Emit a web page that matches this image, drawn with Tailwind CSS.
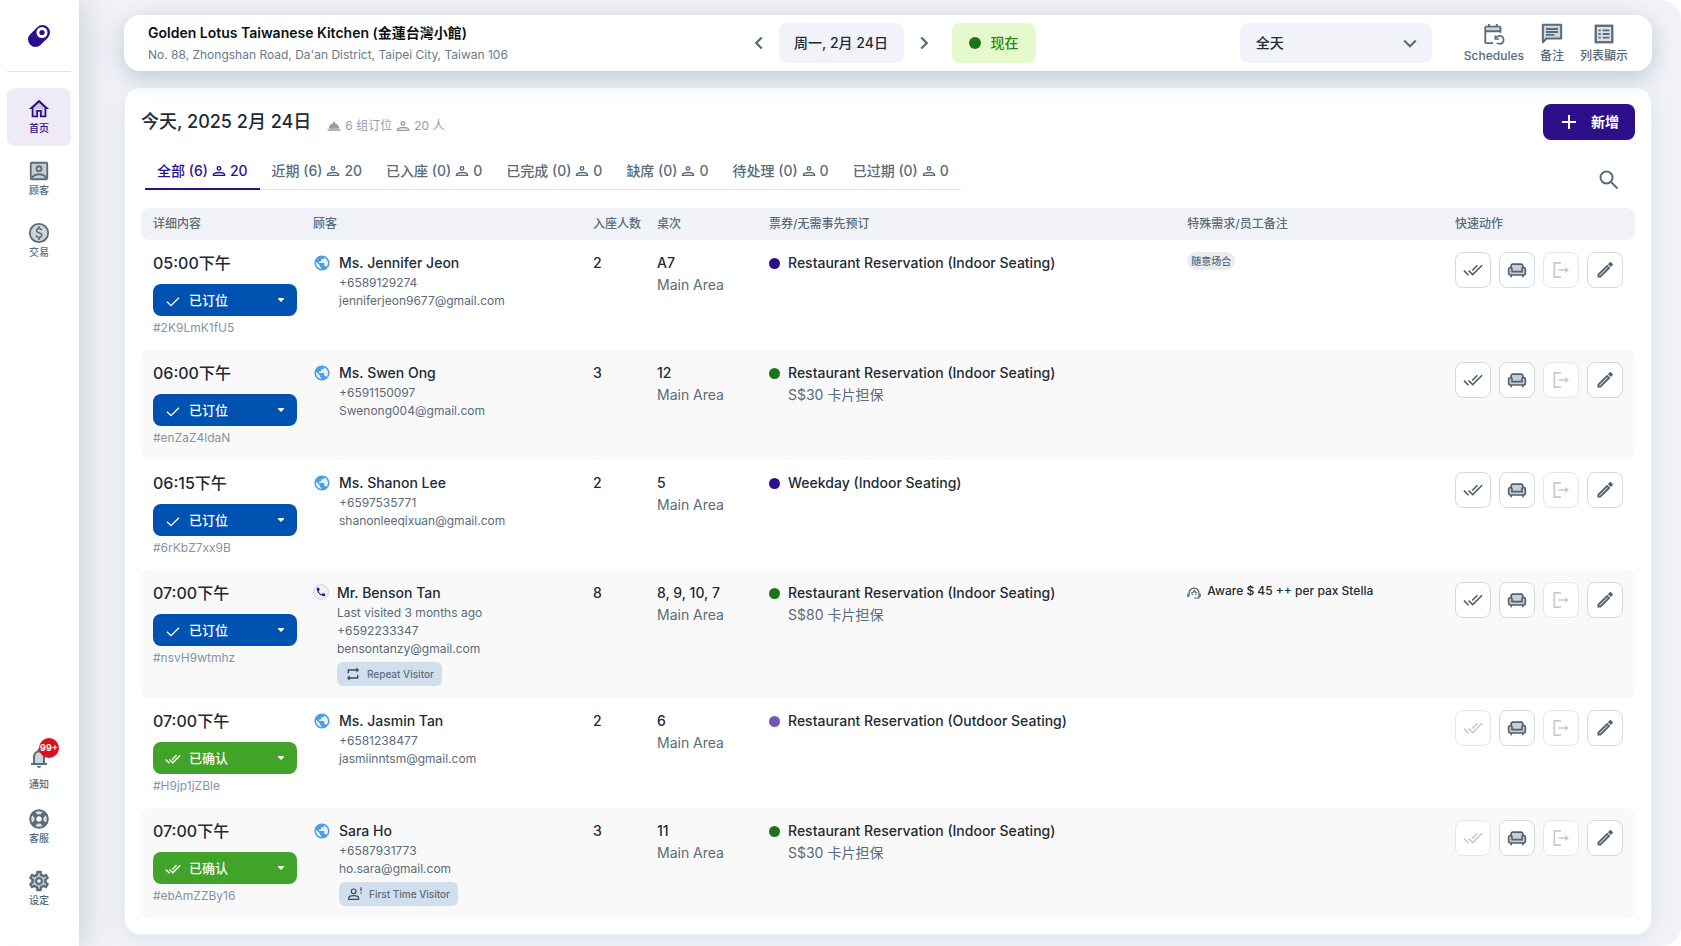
<!DOCTYPE html>
<html lang="zh-CN">
<head>
  <meta charset="UTF-8">
  <meta name="viewport" content="width=device-width, initial-scale=1.0">
  <title>订位列表</title>
  <script src="https://cdn.jsdelivr.net/npm/@tailwindcss/browser@4"></script>
</head>
<body class="bg-white font-['Inter','Noto_Sans_CJK_SC',sans-serif] text-[#212b36]">

  <!-- icon sprite -->
  <svg class="hidden" aria-hidden="true">
    <symbol id="i-home" viewBox="0 0 24 24"><path fill="#c3c7cf" d="M7 10.2V18h2v-6h6v6h2v-7.800l-5-4.500z"/><path fill="currentColor" d="M12 2 1 12h3v9h7v-6h2v6h7v-9h3L12 2zm6 17h-3v-6H9v6H6v-8.500l6-5.400 6 5.400V19z"/></symbol>
    <symbol id="i-contact" viewBox="0 0 24 24"><g fill="#c9ced6" stroke="currentColor" stroke-width="2"><rect x="3" y="3" width="18" height="18" rx="1"/><circle cx="12" cy="9.500" r="2.700"/><path fill="none" d="M4 19.500c2-2.700 4.600-4 8-4s6 1.300 8 4"/></g></symbol>
    <symbol id="i-money" viewBox="0 0 24 24"><circle cx="12" cy="12" r="10" fill="#cfd4dc" stroke="currentColor" stroke-width="2"/><path fill="currentColor" d="M12.890 11.100c-1.780-.590-2.640-.960-2.640-1.900 0-1.020 1.110-1.390 1.810-1.390 1.310 0 1.790.990 1.900 1.340l1.580-.670c-.150-.440-.820-1.910-2.660-2.230V4.500h-1.750v1.760c-2.600.560-2.620 2.850-2.620 2.960 0 2.270 2.250 2.910 3.350 3.310 1.580.560 2.280 1.070 2.280 2.030 0 1.130-1.050 1.610-1.980 1.610-1.820 0-2.340-1.870-2.400-2.090L8.100 14.750c.630 2.190 2.280 2.780 3.020 2.960v1.790h1.750v-1.740c.520-.090 3.020-.590 3.020-3.220.010-1.390-.600-2.610-3-3.440z"/></symbol>
    <symbol id="i-bell" viewBox="0 0 24 24"><path fill="#cfd4dc" d="M12 6.500c-2.500 0-4 2-4 4.500v6h8v-6c0-2.500-1.500-4.500-4-4.500z"/><path fill="currentColor" d="M12 22c1.100 0 2-.900 2-2h-4c0 1.100.900 2 2 2zm6-5v-6c0-3.070-1.630-5.640-4.500-6.320V4c0-.830-.670-1.500-1.500-1.500s-1.500.670-1.500 1.500v.680C7.640 5.360 6 7.920 6 11v6H4v2h16v-2h-2zm-2 0H8v-6c0-2.480 1.510-4.500 4-4.500s4 2.020 4 4.500v6z"/></symbol>
    <symbol id="i-support" viewBox="0 0 24 24"><circle cx="12" cy="12" r="7" fill="none" stroke="#dde1e6" stroke-width="6"/><g fill="none" stroke="currentColor" stroke-width="2.200"><circle cx="12" cy="12" r="9.600"/><circle cx="12" cy="12" r="4"/></g><path stroke="currentColor" stroke-width="5" d="m5.600 5.600 3.400 3.400M15 15l3.400 3.400M18.400 5.600 15 9M9 15l-3.400 3.400"/></symbol>
    <symbol id="i-gear" viewBox="1 1 22 22"><path fill="none" stroke="#cfd4dc" stroke-width="3" d="M12 6.500a5.500 5.500 0 1 0 0 11 5.500 5.500 0 1 0 0-11z"/><path fill="currentColor" stroke="currentColor" stroke-width=".5" d="M19.430 12.980c.040-.320.070-.640.070-.980 0-.340-.030-.660-.070-.980l2.110-1.650c.190-.150.240-.420.120-.640l-2-3.460c-.090-.160-.260-.250-.440-.250-.060 0-.120.010-.170.030l-2.490 1c-.520-.400-1.080-.730-1.690-.980l-.380-2.650C14.460 2.180 14.250 2 14 2h-4c-.250 0-.460.180-.490.420l-.380 2.650c-.610.250-1.170.590-1.690.980l-2.490-1c-.060-.020-.120-.030-.180-.030-.170 0-.340.090-.430.250l-2 3.460c-.130.220-.070.490.120.640l2.110 1.650c-.040.320-.070.650-.070.980 0 .330.030.660.070.980l-2.110 1.650c-.190.150-.240.420-.120.640l2 3.460c.090.160.260.250.440.250.060 0 .120-.010.170-.030l2.490-1c.520.400 1.080.730 1.690.980l.380 2.650c.030.240.240.420.490.420h4c.250 0 .460-.180.490-.420l.380-2.650c.610-.250 1.170-.590 1.690-.980l2.490 1c.060.020.120.030.180.030.170 0 .340-.090.430-.250l2-3.460c.120-.220.070-.490-.120-.640l-2.110-1.650zm-1.980-1.710c.040.310.050.520.050.730 0 .210-.020.430-.050.730l-.140 1.130.890.700 1.080.840-.700 1.210-1.270-.510-1.040-.420-.900.680c-.430.320-.840.560-1.250.730l-1.060.430-.160 1.130-.200 1.350h-1.400l-.190-1.350-.160-1.130-1.060-.430c-.430-.180-.830-.410-1.230-.710l-.910-.700-1.060.430-1.270.510-.700-1.210 1.080-.840.890-.700-.140-1.130c-.030-.310-.050-.540-.050-.740s.020-.430.050-.730l.140-1.130-.890-.700-1.080-.840.700-1.210 1.270.510 1.040.420.900-.680c.430-.320.840-.560 1.250-.730l1.060-.430.160-1.130.200-1.350h1.390l.190 1.350.160 1.130 1.060.430c.430.180.830.410 1.230.710l.910.700 1.060-.430 1.270-.510.700 1.210-1.070.850-.890.700.140 1.130zM12 8c-2.210 0-4 1.790-4 4s1.790 4 4 4 4-1.790 4-4-1.790-4-4-4zm0 6c-1.100 0-2-.900-2-2s.900-2 2-2 2 .900 2 2-.900 2-2 2z"/></symbol>
    <symbol id="i-left" viewBox="0 0 24 24"><path fill="none" stroke="currentColor" stroke-width="2.500" d="m15 6-6 6 6 6"/></symbol>
    <symbol id="i-right" viewBox="0 0 24 24"><path fill="none" stroke="currentColor" stroke-width="2.500" d="m9 6 6 6-6 6"/></symbol>
    <symbol id="i-down" viewBox="0 0 24 24"><path fill="none" stroke="currentColor" stroke-width="2.500" d="m5 9 7 7 7-7"/></symbol>
    <symbol id="i-schedule" viewBox="0 0 24 24"><path fill="#cfd4dc" d="M4 5h16v4H4z"/><g fill="none" stroke="currentColor" stroke-width="2"><path d="M11 22H3.500a1 1 0 0 1-1-1V5a1 1 0 0 1 1-1H18a1 1 0 0 1 1 1v5.500M2.500 9H19M6.500 1v3M15 1v3"/><path stroke-width="1.800" d="M14.500 16a4.400 4.400 0 1 1 .500 5.500M13.500 13.500v4h4"/></g></symbol>
    <symbol id="i-chat" viewBox="0 0 24 24"><path fill="#cfd4dc" stroke="currentColor" stroke-width="2.200" stroke-linejoin="round" d="M2 2h20v15H6l-4 4z"/><path stroke="currentColor" stroke-width="2" d="M5.500 6.500h13M5.500 9.800h13M5.500 13h9"/></symbol>
    <symbol id="i-list" viewBox="0 0 24 24"><rect x="3" y="3" width="18" height="18" fill="#dde1e6" stroke="currentColor" stroke-width="2.500"/><path stroke="currentColor" stroke-width="2" d="M6 8h2.500M10.500 8h7.500M6 12h2.500M10.500 12h7.500M6 16h2.500M10.500 16h7.500"/></symbol>
    <symbol id="i-person" viewBox="0 0 24 24"><g fill="none" stroke="currentColor" stroke-width="2.500"><circle cx="12" cy="7.500" r="3"/><path d="M2.500 19.500v-1c0-2.500 4-3.800 9.500-3.800s9.500 1.300 9.500 3.800v1z"/></g></symbol>
    <symbol id="i-bellhop" viewBox="0 0 24 24"><path fill="currentColor" d="M1 17.500h22V20H1zM12 4.500a2 2 0 0 1 2 2c0 .500-.200 1-.500 1.300 4.300.700 7.500 4 7.500 8.700H3c0-4.700 3.200-8 7.500-8.700-.300-.300-.500-.800-.500-1.300a2 2 0 0 1 2-2z"/></symbol>
    <symbol id="i-plus" viewBox="0 0 24 24"><path stroke="currentColor" stroke-width="2.400" d="M12 3.500v17M3.500 12h17"/></symbol>
    <symbol id="i-search" viewBox="0 0 24 24"><g fill="none" stroke="currentColor" stroke-width="2"><circle cx="9.500" cy="9.500" r="6"/><path d="m14 14 6.500 6.500"/></g></symbol>
    <symbol id="i-globe" viewBox="0 0 24 24"><circle cx="12" cy="12" r="9" fill="#e3f1fc"/><path fill="currentColor" d="M12 2C6.480 2 2 6.480 2 12s4.480 10 10 10 10-4.480 10-10S17.520 2 12 2zm-1 17.930c-3.950-.490-7-3.850-7-7.930 0-.620.080-1.210.210-1.790L9 15v1c0 1.100.900 2 2 2v1.930zm6.900-2.540c-.260-.810-1-1.390-1.900-1.390h-1v-3c0-.550-.450-1-1-1H8v-2h2c.550 0 1-.450 1-1V7h2c1.100 0 2-.900 2-2v-.410c2.930 1.190 5 4.060 5 7.410 0 2.080-.800 3.970-2.100 5.390z"/></symbol>
    <symbol id="i-phone" viewBox="0 0 24 24"><circle cx="12" cy="12" r="11" fill="#eef0f4" stroke="#cfd5dc" stroke-width="1.500"/><path fill="#2e0f8a" transform="translate(3.500 3.500) scale(.7)" d="M6.620 10.790c1.440 2.830 3.760 5.140 6.590 6.590l2.200-2.200c.270-.270.670-.360 1.020-.240 1.120.370 2.330.570 3.570.570.550 0 1 .450 1 1V20c0 .550-.450 1-1 1-9.390 0-17-7.610-17-17 0-.550.450-1 1-1h3.500c.550 0 1 .450 1 1 0 1.250.200 2.450.570 3.570.110.350.030.740-.250 1.020l-2.200 2.200z"/></symbol>
    <symbol id="i-check" viewBox="0 0 24 24"><path fill="none" stroke="currentColor" stroke-width="2" d="m3 13 6 6L21 7"/></symbol>
    <symbol id="i-done" viewBox="0 0 24 24"><path fill="currentColor" d="M18 7l-1.410-1.410-6.340 6.340 1.410 1.410L18 7zm4.240-1.410L11.660 16.170 7.480 12l-1.410 1.410L11.660 19l12-12-1.420-1.410zM.410 13.410L6 19l1.410-1.410L1.830 12 .410 13.410z"/></symbol>
    <symbol id="i-caret" viewBox="0 0 24 24"><path fill="currentColor" d="M6 8h12v2l-6 6-6-6z"/></symbol>
    <symbol id="i-sofa" viewBox="0 0 24 24"><path fill="#c9ced6" d="M5 5h14v4h3v9H2V9h3z"/><path fill="currentColor" d="M20 8V7c0-1.660-1.340-3-3-3H7C5.340 4 4 5.340 4 7v1c-1.660 0-3 1.340-3 3v5c0 1.660 1.340 3 3 3v1c0 .550.450 1 1 1s1-.450 1-1v-1h12v1c0 .550.450 1 1 1s1-.450 1-1v-1c1.660 0 3-1.340 3-3v-5c0-1.660-1.340-3-3-3zM6 7c0-.550.450-1 1-1h10c.550 0 1 .450 1 1v1.780c-.610.550-1 1.340-1 2.220v2H7v-2c0-.880-.390-1.670-1-2.220V7zm15 9c0 .550-.450 1-1 1H4c-.550 0-1-.450-1-1v-5c0-.550.450-1 1-1s1 .450 1 1v4h14v-4c0-.550.450-1 1-1s1 .450 1 1v5z"/></symbol>
    <symbol id="i-exit" viewBox="0 0 24 24"><path fill="none" stroke="currentColor" stroke-width="2" d="M12 3.500H4v17h8M9 12h11"/><path fill="currentColor" d="m17 8.500 4.500 3.500-4.500 3.500z"/></symbol>
    <symbol id="i-edit" viewBox="0 0 24 24"><path fill="#c9ced6" stroke="currentColor" stroke-width="2" d="M4 17.500V20h2.500L17 9.500 14.500 7z"/><path fill="currentColor" d="m15.500 5 2.200-2.200c.400-.400 1-.400 1.400 0l2.100 2.100c.400.400.400 1 0 1.400L19 8.500z"/></symbol>
    <symbol id="i-repeat" viewBox="0 0 24 24"><path fill="currentColor" d="M6 7h11v3l4-4-4-4v3H4v6h2V7zm12 10H7v-3l-4 4 4 4v-3h13v-6h-2v4z"/></symbol>
    <symbol id="i-first" viewBox="0 0 24 24"><g fill="none" stroke="currentColor" stroke-width="1.800"><circle cx="10" cy="8" r="3.500"/><path d="M2.500 20v-1.500c0-2.500 3.300-4 7.500-4s7.500 1.500 7.500 4V20z"/><path d="M21 2v5.500M21 9.500v2"/></g></symbol>
    <symbol id="i-agent" viewBox="0 0 24 24"><g fill="none" stroke="currentColor" stroke-width="2"><path d="M3.500 17v-5a8.500 8.500 0 0 1 17 0v8.500h-8"/><path d="M1.500 13v5h2M22.500 13v5h-2M6.500 12c3 0 5-1.500 6-4 1 2 2.500 3.300 5 3.500"/></g><circle cx="9" cy="14.500" r="1.200" fill="currentColor"/><circle cx="15" cy="14.500" r="1.200" fill="currentColor"/></symbol>
  </svg>

  <div class="flex min-h-screen overflow-hidden rounded-[20px] bg-[#f1f3f8]">

    <nav class="z-10 flex w-[79px] shrink-0 flex-col items-center bg-white pr-px pb-[38px] text-[10px] font-medium leading-4 text-[#5a6b79] shadow-[6px_0_32px_#ccd2d8]">
      <a href="#" class="mt-6 block" aria-label="Home">
        <svg class="size-6" viewBox="0 0 24 24"><path stroke="#2e0f8a" stroke-width="15" stroke-linecap="round" d="m8.500 15.500 7-7"/><circle cx="15" cy="8.500" r="5.500" fill="#fff"/><circle cx="15" cy="8.500" r="2.600" fill="#2e0f8a"/></svg>
      </a>
      <div class="mt-[23px] h-px w-16 bg-[#e1e4e8]"></div>
      <div class="mt-4 flex flex-col gap-1">
        <a href="#" class="flex h-[58px] w-16 flex-col items-center justify-center rounded-lg bg-[#eeebf6] text-[#2e0f8a]">
          <svg class="size-[22px]"><use href="#i-home"/></svg>首页
        </a>
        <a href="#" class="flex h-[58px] w-16 flex-col items-center justify-center">
          <svg class="size-[22px]"><use href="#i-contact"/></svg>顾客
        </a>
        <a href="#" class="flex h-[58px] w-16 flex-col items-center justify-center">
          <svg class="size-[22px]"><use href="#i-money"/></svg>交易
        </a>
      </div>
      <div class="mt-auto flex flex-col items-center">
        <a href="#" class="relative flex flex-col items-center gap-1.5">
          <svg class="size-6"><use href="#i-bell"/></svg>通知
          <span class="absolute -top-2 left-3 flex size-5 items-center justify-center rounded-full bg-[#d9101e] text-[9px] font-bold text-white">99+</span>
        </a>
        <a href="#" class="mt-4 flex flex-col items-center">
          <svg class="size-[22px]"><use href="#i-support"/></svg>客服
        </a>
        <a href="#" class="mt-6 flex flex-col items-center">
          <svg class="size-[22px]"><use href="#i-gear"/></svg>设定
        </a>
      </div>
    </nav>

    <main class="flex min-w-0 flex-1 flex-col gap-4 pt-[15px] pr-[29px] pb-[11px] pl-[45px]">

      <header class="z-20 grid h-14 grid-cols-[1fr_auto_1fr] items-center rounded-2xl bg-white px-6 shadow-[0_6px_24px_#bfc7cf]">
        <div class="pt-0.5">
          <h1 class="text-sm font-semibold leading-5 text-[#0c1116]">Golden Lotus Taiwanese Kitchen (金蓮台灣小館)</h1>
          <p class="mt-0.5 text-xs leading-5 text-[#6b7a88]">No. 88, Zhongshan Road, Da'an District, Taipei City, Taiwan 106</p>
        </div>
        <div class="flex items-center gap-1 pl-0.5">
          <button class="flex h-10 w-8 items-center justify-center text-[#5a6b79]" aria-label="前一天"><svg class="size-[22px]"><use href="#i-left"/></svg></button>
          <button class="h-10 w-[125px] rounded-lg bg-[#f2f3f8] text-sm font-medium">周一, 2月 24日</button>
          <button class="flex h-10 w-8 items-center justify-center text-[#5a6b79]" aria-label="后一天"><svg class="size-[22px]"><use href="#i-right"/></svg></button>
          <button class="ml-2 flex h-10 w-[84px] items-center justify-center gap-2.5 rounded-lg bg-[#e6f9cd] text-sm font-medium text-[#1d8a17]"><span class="size-3 rounded-full bg-[#1d751b]"></span>现在</button>
        </div>
        <div class="flex items-center justify-end text-xs font-medium text-[#5a6b79]">
          <div class="relative mr-8">
            <select aria-label="时段" class="h-10 w-48 appearance-none rounded-lg bg-[#f2f3f8] px-4 text-sm font-medium text-[#212b36]">
              <option>全天</option>
            </select>
            <svg class="pointer-events-none absolute top-2.5 right-3 size-5"><use href="#i-down"/></svg>
          </div>
          <div class="flex gap-4 pt-0.5">
            <button class="flex flex-col items-center gap-0.5 leading-[18px]"><svg class="size-[22px]"><use href="#i-schedule"/></svg>Schedules</button>
            <button class="flex flex-col items-center gap-0.5 leading-[18px]"><svg class="size-[22px]"><use href="#i-chat"/></svg>备注</button>
            <button class="flex flex-col items-center gap-0.5 leading-[18px]"><svg class="size-[22px]"><use href="#i-list"/></svg>列表顯示</button>
          </div>
        </div>
      </header>

      <section class="flex-1 rounded-2xl border border-[#edf0f3] bg-white p-4 shadow-[0_4px_24px_#dce2e7]">
        <div class="flex h-9 items-center">
          <h2 class="text-lg font-medium">今天, 2025 2月 24日</h2>
          <p class="ml-4 mt-2 flex items-center gap-1 text-xs text-[#919eab]">
            <svg class="size-3.5"><use href="#i-bellhop"/></svg>6 组订位
            <svg class="size-3.5"><use href="#i-person"/></svg><span>20 人</span>
          </p>
          <button class="ml-auto flex h-9 w-[92px] items-center justify-center gap-3 rounded-lg bg-[#2e0f8a] text-sm font-semibold text-white"><svg class="size-5"><use href="#i-plus"/></svg>新增</button>
        </div>

        <div class="mt-3 flex h-14 items-start justify-between">
          <div id="tabs" role="tablist" class="ml-1 flex h-[38px] border-b border-[#dfe3e8] text-sm font-medium text-[#5a6b79]"></div>
          <button class="mr-1 flex size-11 items-center justify-center self-center text-[#5a6b79]" aria-label="搜索"><svg class="size-6"><use href="#i-search"/></svg></button>
        </div>

        <table class="w-full table-fixed border-separate border-spacing-0 text-left">
          <thead class="bg-[#f2f3f8] text-xs text-[#5a6b79]">
            <tr class="h-8">
              <th class="w-40 rounded-l-lg pl-3 font-medium">详细内容</th>
              <th class="w-[280px] pl-3 font-medium">顾客</th>
              <th class="w-16 whitespace-nowrap pl-3 font-medium">入座人数</th>
              <th class="w-28 pl-3 font-medium">桌次</th>
              <th class="w-[28%] pl-3 font-medium">票券/无需事先预订</th>
              <th class="pl-3 font-medium">特殊需求/员工备注</th>
              <th class="w-48 rounded-r-lg pl-3 font-medium">快速动作</th>
            </tr>
          </thead>
          <tbody id="rows" class="align-top text-sm"></tbody>
        </table>
      </section>
    </main>
  </div>

  <script>
    const tabs = [['全部', 6, 20], ['近期', 6, 20], ['已入座', 0, 0], ['已完成', 0, 0], ['缺席', 0, 0], ['待处理', 0, 0], ['已过期', 0, 0]];

    const rows = [
      { time: '05:00下午', status: '已订位', id: '#2K9LmK1fU5', name: 'Ms. Jennifer Jeon', lines: ['+6589129274', 'jenniferjeon9677@gmail.com'], pax: 2, table: 'A7', dot: 'bg-[#2e0f8a]', ticket: 'Restaurant Reservation (Indoor Seating)', tag: '随意场合' },
      { time: '06:00下午', status: '已订位', id: '#enZaZ4ldaN', name: 'Ms. Swen Ong', lines: ['+6591150097', 'Swenong004@gmail.com'], pax: 3, table: '12', dot: 'bg-[#1d751b]', ticket: 'Restaurant Reservation (Indoor Seating)', card: 'S$30 卡片担保' },
      { time: '06:15下午', status: '已订位', id: '#6rKbZ7xx9B', name: 'Ms. Shanon Lee', lines: ['+6597535771', 'shanonleeqixuan@gmail.com'], pax: 2, table: '5', dot: 'bg-[#2e0f8a]', ticket: 'Weekday (Indoor Seating)' },
      { time: '07:00下午', status: '已订位', id: '#nsvH9wtmhz', name: 'Mr. Benson Tan', phone: true, lines: ['Last visited 3 months ago', '+6592233347', 'bensontanzy@gmail.com'], badge: 'Repeat Visitor', badgeIcon: 'repeat', pax: 8, table: '8, 9, 10, 7', dot: 'bg-[#1d751b]', ticket: 'Restaurant Reservation (Indoor Seating)', card: 'S$80 卡片担保', note: 'Aware $ 45 ++ per pax Stella' },
      { time: '07:00下午', status: '已确认', id: '#H9jp1jZBle', name: 'Ms. Jasmin Tan', lines: ['+6581238477', 'jasmiinntsm@gmail.com'], pax: 2, table: '6', dot: 'bg-[#7357b8]', ticket: 'Restaurant Reservation (Outdoor Seating)' },
      { time: '07:00下午', status: '已确认', id: '#ebAmZZBy16', name: 'Sara Ho', lines: ['+6587931773', 'ho.sara@gmail.com'], badge: 'First Time Visitor', badgeIcon: 'first', pax: 3, table: '11', dot: 'bg-[#1d751b]', ticket: 'Restaurant Reservation (Indoor Seating)', card: 'S$30 卡片担保' },
    ];

    const icon = (name, cls) => `<svg class="${cls}"><use href="#i-${name}"/></svg>`;

    document.getElementById('tabs').innerHTML = tabs.map(([label, groups, people], i) => `
      <button role="tab" aria-selected="${i === 0}" class="-mb-px flex items-center gap-1 whitespace-nowrap px-3 pt-0.5 ${i === 0 ? 'border-b-2 border-[#2e0f8a] text-[#2e0f8a]' : 'border-b-2 border-transparent'}">
        ${label} (${groups}) ${icon('person', 'size-3.5')} ${people}
      </button>`).join('');

    const action = (name, label, off) => `
      <button aria-label="${label}" ${off ? 'disabled' : ''} class="flex size-9 items-center justify-center rounded-lg border bg-white ${off ? 'border-[#e4e7eb] text-[#c4cbd2]' : 'border-[#d3d9df] text-[#4f606e]'}">${icon(name, 'size-5')}</button>`;

    document.getElementById('rows').innerHTML = rows.map((r, i) => {
      const done = r.status === '已确认';
      return `
      <tr class="${r.phone ? 'h-32' : 'h-[110px]'} ${i % 2 ? 'bg-[#f9f9f9]' : ''}">
        <td class="rounded-l-lg py-3 pl-3">
          <div class="text-base font-medium leading-[22px]">${r.time}</div>
          <div class="relative mt-2.5 w-36 text-white">
            <select aria-label="订位状态" class="h-8 w-full appearance-none rounded-lg pl-9 text-[13px] font-medium ${done ? 'bg-[#42a32b]' : 'bg-[#0052b0]'}"><option>${r.status}</option></select>
            ${icon(done ? 'done' : 'check', 'pointer-events-none absolute top-[9px] left-3 size-4')}
            ${icon('caret', 'pointer-events-none absolute top-2.5 right-2.5 size-3')}
          </div>
          <div class="mt-1 text-xs text-[#8694a1]">${r.id}</div>
        </td>
        <td class="py-3 pl-3">
          <div class="flex gap-2">
            ${r.phone ? icon('phone', 'mt-0.5 size-4 shrink-0') : icon('globe', 'mt-0.5 size-[18px] shrink-0 text-[#4d9fe0]')}
            <div>
              <div class="font-medium leading-[22px]">${r.name}</div>
              ${r.lines.map(l => `<div class="text-xs leading-[18px] text-[#5a6b79]">${l}</div>`).join('')}
              ${r.badge ? `<div class="mt-1 flex h-6 w-fit items-center gap-1.5 rounded-md bg-[#d1deed] px-2 text-[10px] font-medium text-[#5f6c78]">${icon(r.badgeIcon, 'size-4 text-[#3c4a57]')}${r.badge}</div>` : ''}
            </div>
          </div>
        </td>
        <td class="py-3 pl-3 font-medium leading-[22px]">${r.pax}</td>
        <td class="py-3 pl-3 leading-[22px]"><div class="font-medium">${r.table}</div><div class="text-[#5a6b79]">Main Area</div></td>
        <td class="py-3 pl-3 leading-[22px]">
          <div class="flex items-center gap-2 font-medium"><span class="size-[11px] rounded-full ${r.dot}"></span>${r.ticket}</div>
          ${r.card ? `<div class="ml-[19px] text-[#5a6b79]">${r.card}</div>` : ''}
        </td>
        <td class="py-3 pl-3">
          ${r.tag ? `<span class="flex h-[18px] w-12 items-center justify-center rounded-full bg-[#e9ecf0] text-[10px] font-medium text-[#5a6b79]">${r.tag}</span>` : ''}
          ${r.note ? `<div class="flex gap-1.5 text-xs font-medium leading-[18px]">${icon('agent', 'mt-1 size-3.5 shrink-0 text-[#4f606e]')}${r.note}</div>` : ''}
        </td>
        <td class="rounded-r-lg py-3 pl-3">
          <div class="flex gap-2">
            ${action('done', '确认', done)}${action('sofa', '入座', false)}${action('exit', '离席', true)}${action('edit', '编辑', false)}
          </div>
        </td>
      </tr>`;
    }).join('');
  </script>
</body>
</html>
